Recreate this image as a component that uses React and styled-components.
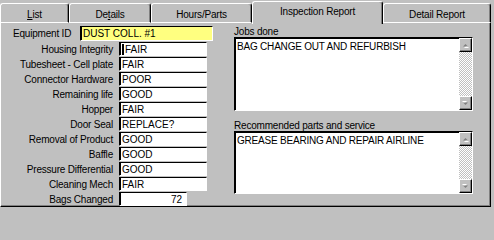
import React from "react";
import styled, { createGlobalStyle } from "styled-components";

const GlobalStyle = createGlobalStyle`
  html, body {
    margin: 0;
    padding: 0;
    background: #c0c0c0;
  }
  body {
    font-family: "Liberation Sans", Arial, sans-serif;
    font-size: 10px;
    letter-spacing: -0.2px;
    color: #000;
  }
`;

const Window = styled.div`
  width: 494px;
  height: 208px;
  background: #c0c0c0;
  overflow: hidden;
`;

const TabBar = styled.div`
  display: flex;
  align-items: flex-end;
  height: 23px;
`;

const Tab = styled.div`
  box-sizing: border-box;
  position: relative;
  z-index: ${(p) => (p.$active ? 1 : 0)};
  width: ${(p) => p.$w}px;
  height: ${(p) => (p.$active ? 23 : 20)}px;
  margin-bottom: ${(p) => (p.$active ? -1 : 0)}px;
  display: flex;
  align-items: center;
  justify-content: center;
  padding: ${(p) => (p.$active ? "0 0 3px" : "2px 0 0")};
  background: #c0c0c0;
  border-top: 1px solid #fff;
  border-left: 1px solid #fff;
  border-right: 1px solid #000;
  border-bottom: ${(p) => (p.$active ? "none" : "1px solid #fff")};
  border-radius: 3px 3px 0 0;
  box-shadow: inset -1px 0 0 #808080;
`;

const Panel = styled.div`
  box-sizing: border-box;
  width: 491px;
  height: 184px;
  display: flex;
  padding-top: 3px;
  border-left: 1px solid #fff;
  border-right: 1px solid #000;
  border-bottom: 1px solid #000;
  box-shadow: inset -1px -1px 0 #808080;
`;

const FormColumn = styled.div`
  width: 214px;
  display: flex;
  flex-direction: column;
  gap: 1px;
`;

const IdRow = styled.div`
  display: flex;
  align-items: center;
  height: 15px;
  padding-left: 12px;
`;

const IdLabel = styled.span`
  width: 67px;
`;

const FieldRow = styled.div`
  display: grid;
  grid-template-columns: 112px auto;
  column-gap: 6px;
  align-items: center;
  height: 14px;
`;

const Label = styled.span`
  text-align: right;
  white-space: nowrap;
`;

const Field = styled.div`
  box-sizing: border-box;
  width: ${(p) => p.$w}px;
  height: ${(p) => p.$h || 14}px;
  display: flex;
  align-items: center;
  justify-content: ${(p) => (p.$right ? "flex-end" : "flex-start")};
  padding: 0 ${(p) => (p.$right ? 4 : 2)}px 0 2px;
  background: ${(p) => p.$bg || "#fff"};
  border: 1px solid;
  border-color: #000 #fff #fff #000;
  box-shadow: inset 1px 0 0 #000;
  white-space: nowrap;
  letter-spacing: 0;
`;

const Caret = styled.span`
  width: 2px;
  height: 11px;
  margin-right: 1px;
  background: #000;
`;

const MemoColumn = styled.div`
  width: 239px;
  margin-left: 19px;
  display: flex;
  flex-direction: column;
`;

const MemoLabel = styled.div`
  height: 11px;
  line-height: 11px;
  margin-top: ${(p) => p.$gap || 0}px;
`;

const MemoBox = styled.div`
  box-sizing: border-box;
  height: ${(p) => p.$h}px;
  display: flex;
  background: #fff;
  border: 1px solid;
  border-color: #000 #fff #fff #000;
  box-shadow: inset 1px 1px 0 #000;
`;

const MemoText = styled.div`
  flex: 1;
  padding: 3px 2px 0 2px;
  white-space: nowrap;
`;

const ScrollBar = styled.div`
  width: 13px;
  display: flex;
  flex-direction: column;
  background: repeating-conic-gradient(#fff 0 25%, #c0c0c0 0 50%) 0 0 / 2px 2px;
`;

const ScrollButton = styled.div`
  box-sizing: border-box;
  height: 14px;
  display: flex;
  align-items: center;
  justify-content: center;
  background: #c0c0c0;
  border: 1px solid;
  border-color: #fff #000 #000 #fff;
  box-shadow: inset -1px -1px 0 #808080;
`;

const Track = styled.div`
  flex: 1;
`;

const Arrow = ({ down }) => (
  <svg width="7" height="5" viewBox="0 0 7 5">
    <g transform={down ? "rotate(180 3.5 2.5)" : undefined}>
      <polygon points="3.5,1.5 6,4 1,4" fill="#fff" transform="translate(1 1)" />
      <polygon points="3.5,1 6,3.5 1,3.5" fill="#808080" />
    </g>
  </svg>
);

const Memo = ({ height, text }) => (
  <MemoBox $h={height}>
    <MemoText>{text}</MemoText>
    <ScrollBar>
      <ScrollButton>
        <Arrow />
      </ScrollButton>
      <Track />
      <ScrollButton>
        <Arrow down />
      </ScrollButton>
    </ScrollBar>
  </MemoBox>
);

const tabs = [
  { label: <><u>L</u>ist</>, w: 69 },
  { label: <>De<u>t</u>ails</>, w: 82 },
  { label: "Hours/Parts", w: 101 },
  { label: "Inspection Report", w: 131, active: true },
  { label: "Detail Report", w: 108 },
];

const fields = [
  ["Housing Integrity", "FAIR", true],
  ["Tubesheet - Cell plate", "FAIR"],
  ["Connector Hardware", "POOR"],
  ["Remaining life", "GOOD"],
  ["Hopper", "FAIR"],
  ["Door Seal", "REPLACE?"],
  ["Removal of Product", "GOOD"],
  ["Baffle", "GOOD"],
  ["Pressure Differential", "GOOD"],
  ["Cleaning Mech", "FAIR"],
];

export default function App() {
  return (
    <Window>
      <GlobalStyle />
      <TabBar>
        {tabs.map((t, i) => (
          <Tab key={i} $w={t.w} $active={t.active}>
            {t.label}
          </Tab>
        ))}
      </TabBar>
      <Panel>
        <FormColumn>
          <IdRow>
            <IdLabel>Equipment ID</IdLabel>
            <Field $w={133} $h={15} $bg="#ffff80">DUST COLL. #1</Field>
          </IdRow>
          {fields.map(([label, value, focused]) => (
            <FieldRow key={label}>
              <Label>{label}</Label>
              <Field $w={88}>
                {focused && <Caret />}
                {value}
              </Field>
            </FieldRow>
          ))}
          <FieldRow>
            <Label>Bags Changed</Label>
            <Field $w={68} $right>72</Field>
          </FieldRow>
        </FormColumn>
        <MemoColumn>
          <MemoLabel>Jobs done</MemoLabel>
          <Memo height={74} text="BAG CHANGE OUT AND REFURBISH" />
          <MemoLabel $gap={9}>Recommended parts and service</MemoLabel>
          <Memo height={63} text="GREASE BEARING AND REPAIR AIRLINE" />
        </MemoColumn>
      </Panel>
    </Window>
  );
}
